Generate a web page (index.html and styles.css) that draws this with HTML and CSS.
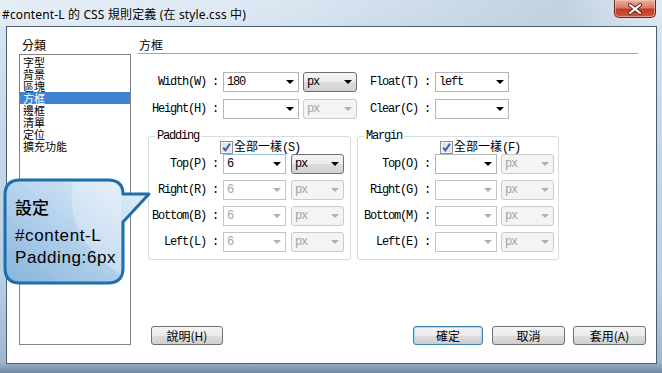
FILE: index.html
```html
<!DOCTYPE html>
<html lang="zh-TW">
<head>
    <meta charset="UTF-8">
    <meta name="viewport" content="width=device-width, initial-scale=1.0">
    <title>#content-L 的 CSS 規則定義</title>
    <link rel="stylesheet" href="styles.css">
</head>
<body>
    <div class="window">
        <!-- 標題列 -->
        <div class="titlebar">
            <span class="title">#content-L 的 CSS 規則定義 (在 style.css 中)</span>
            <div class="close">
                <svg width="16" height="12" viewBox="0 0 16 12">
                    <path d="M3 2 L13 10 M13 2 L3 10" stroke="#5a2418" stroke-width="4" stroke-linecap="round"/>
                    <path d="M3 2 L13 10 M13 2 L3 10" stroke="#ffffff" stroke-width="2.2" stroke-linecap="round"/>
                </svg>
            </div>
        </div>

        <div class="client">
            <!-- 分類 -->
            <div class="category">
                <div class="heading">分類</div>
                <ul class="list">
                    <li>字型</li>
                    <li>背景</li>
                    <li>區塊</li>
                    <li class="selected">方框</li>
                    <li>邊框</li>
                    <li>清單</li>
                    <li>定位</li>
                    <li>擴充功能</li>
                </ul>
            </div>

            <!-- 方框 -->
            <div class="panel">
                <div class="panel-title">方框</div>

                <div class="row">
                    <span class="lbl lbl-main m">Width(W) :</span>
                    <div class="select w-size"><span class="m">180</span><i class="arrow"></i></div>
                    <div class="select unit w-unit"><span class="m">px</span><i class="arrow"></i></div>
                    <span class="lbl lbl-side m">Float(T) :</span>
                    <div class="select w-float"><span class="m">left</span><i class="arrow"></i></div>
                </div>
                <div class="row row-2">
                    <span class="lbl lbl-main m">Height(H) :</span>
                    <div class="select w-size"><span class="m"></span><i class="arrow"></i></div>
                    <div class="select unit off w-unit"><span class="m">px</span><i class="arrow"></i></div>
                    <span class="lbl lbl-side m">Clear(C) :</span>
                    <div class="select w-float"><span class="m"></span><i class="arrow"></i></div>
                </div>

                <div class="groups">
                    <fieldset class="group group-pad">
                        <legend class="m">Padding</legend>
                        <div class="same">
                            <svg class="check" width="13" height="13" viewBox="0 0 13 13">
                                <rect x="0.5" y="0.5" width="12" height="12" fill="#f4f4f4" stroke="#8e8f8f"/>
                                <rect x="2" y="2" width="9" height="9" fill="#e2e6ec"/>
                                <path d="M3.2 6.6 L5.4 9.4 L10 2.8" fill="none" stroke="#3a5da6" stroke-width="1.9"/>
                            </svg>
                            <span class="same-text">全部一樣<span class="m">(S)</span></span>
                        </div>
                        <div class="row">
                            <span class="lbl m">Top(P) :</span>
                            <div class="select box focus"><span class="m">6</span><i class="arrow"></i></div>
                            <div class="select unit"><span class="m">px</span><i class="arrow"></i></div>
                        </div>
                        <div class="row">
                            <span class="lbl m">Right(R) :</span>
                            <div class="select box off"><span class="m">6</span><i class="arrow"></i></div>
                            <div class="select unit off"><span class="m">px</span><i class="arrow"></i></div>
                        </div>
                        <div class="row">
                            <span class="lbl m">Bottom(B) :</span>
                            <div class="select box off"><span class="m">6</span><i class="arrow"></i></div>
                            <div class="select unit off"><span class="m">px</span><i class="arrow"></i></div>
                        </div>
                        <div class="row">
                            <span class="lbl m">Left(L) :</span>
                            <div class="select box off"><span class="m">6</span><i class="arrow"></i></div>
                            <div class="select unit off"><span class="m">px</span><i class="arrow"></i></div>
                        </div>
                    </fieldset>

                    <fieldset class="group group-mar">
                        <legend class="m">Margin</legend>
                        <div class="same">
                            <svg class="check" width="13" height="13" viewBox="0 0 13 13">
                                <rect x="0.5" y="0.5" width="12" height="12" fill="#f4f4f4" stroke="#8e8f8f"/>
                                <rect x="2" y="2" width="9" height="9" fill="#e2e6ec"/>
                                <path d="M3.2 6.6 L5.4 9.4 L10 2.8" fill="none" stroke="#3a5da6" stroke-width="1.9"/>
                            </svg>
                            <span class="same-text">全部一樣<span class="m">(F)</span></span>
                        </div>
                        <div class="row">
                            <span class="lbl m">Top(O) :</span>
                            <div class="select box"><span class="m"></span><i class="arrow"></i></div>
                            <div class="select unit off"><span class="m">px</span><i class="arrow"></i></div>
                        </div>
                        <div class="row">
                            <span class="lbl m">Right(G) :</span>
                            <div class="select box off"><span class="m"></span><i class="arrow"></i></div>
                            <div class="select unit off"><span class="m">px</span><i class="arrow"></i></div>
                        </div>
                        <div class="row">
                            <span class="lbl m">Bottom(M) :</span>
                            <div class="select box off"><span class="m"></span><i class="arrow"></i></div>
                            <div class="select unit off"><span class="m">px</span><i class="arrow"></i></div>
                        </div>
                        <div class="row">
                            <span class="lbl m">Left(E) :</span>
                            <div class="select box off"><span class="m"></span><i class="arrow"></i></div>
                            <div class="select unit off"><span class="m">px</span><i class="arrow"></i></div>
                        </div>
                    </fieldset>
                </div>

                <div class="buttons">
                    <button class="btn btn-help">說明(H)</button>
                    <button class="btn btn-ok">確定</button>
                    <button class="btn btn-cancel">取消</button>
                    <button class="btn btn-apply">套用(A)</button>
                </div>
            </div>
        </div>

        <!-- 說明框 -->
        <div class="bubble">
            <svg width="152" height="112" viewBox="0 0 152 112">
                <defs>
                    <linearGradient id="bubbleFill" x1="1" y1="0" x2="0" y2="1">
                        <stop offset="0" stop-color="#e6f1fa"/>
                        <stop offset="0.45" stop-color="#bcd7ef"/>
                        <stop offset="1" stop-color="#86b3dc"/>
                    </linearGradient>
                </defs>
                <path d="M17 3 H105 Q120 3 120 17 H146 L120 45 V91 Q120 106 105 106 H17 Q2 106 2 91 V18 Q2 3 17 3 Z"
                      fill="url(#bubbleFill)" stroke="#1d6fa9" stroke-width="3" stroke-linejoin="round"/>
                <path d="M70 5 Q60 60 118 98 L118 20 Q118 5 105 5 Z" fill="#ffffff" opacity="0.28"/>
            </svg>
            <div class="bubble-text">
                <div class="b1">設定</div>
                <div class="b2">#content-L</div>
                <div class="b3">Padding:6px</div>
            </div>
        </div>
    </div>
</body>
</html>
```

FILE: styles.css
```css
* {
    box-sizing: border-box;
}
body {
    margin: 0;
    width: 662px;
    height: 373px;
    overflow: hidden;
    font-family: "Noto Sans CJK TC", sans-serif;
    font-size: 12px;
    color: #000;
}
.m {
    font-family: "Liberation Mono", "Noto Sans CJK TC", monospace;
    font-size: 12px;
    letter-spacing: -1.2px;
}

/* 視窗外框 */
.window {
    position: relative;
    width: 662px;
    height: 373px;
    display: flex;
    flex-direction: column;
    background: linear-gradient(180deg, #dce8f3 0%, #c8daeb 30%, #b9cfe4 75%, #9fb6cb 97%, #6f8aa3 100%);
}
.titlebar {
    position: relative;
    height: 26px;
    padding-left: 2px;
    background: linear-gradient(90deg, rgba(255, 255, 255, 0.25) 0%, rgba(255, 255, 255, 0) 40%, rgba(120, 145, 170, 0.25) 85%, rgba(255, 255, 255, 0.1) 100%);
}
.title {
    display: block;
    padding-top: 6px;
    line-height: 17px;
    font-family: "Noto Sans", "Noto Sans CJK TC", sans-serif;
    font-size: 12px;
    letter-spacing: 0.15px;
    text-shadow: 0 0 6px rgba(255, 255, 255, 0.9);
}
.close {
    position: absolute;
    top: 0;
    right: 6px;
    width: 42px;
    height: 18px;
    display: flex;
    align-items: center;
    justify-content: center;
    border: 1px solid #6b2a1e;
    border-top: none;
    border-radius: 0 0 5px 5px;
    background: linear-gradient(180deg, #eab0a2 0%, #d77c66 45%, #c23b22 55%, #d2583e 100%);
    box-shadow: inset 0 0 0 1px rgba(255, 210, 200, 0.5);
}

/* 內容區 */
.client {
    display: flex;
    height: 338px;
    margin: 0 5px 0 6px;
    border: 1px solid #4a5c6e;
    background: #fff;
}
.category {
    width: 124px;
    padding-left: 12px;
}
.heading {
    height: 27px;
    padding: 11px 0 0 3px;
    line-height: 14px;
}
.list {
    height: 291px;
    margin: 0;
    padding: 1px 0 0 0;
    list-style: none;
    border: 1px solid #828282;
}
.list li {
    height: 12px;
    line-height: 12px;
    font-size: 11px;
    padding-left: 3px;
}
.list li.selected {
    background-color: #3e84d3;
    color: #fff;
}

.panel {
    flex: 1;
    margin-left: 7px;
    display: flex;
    flex-direction: column;
}
.panel-title {
    height: 27px;
    margin-right: 18px;
    padding: 11px 0 0 1px;
    line-height: 14px;
    border-bottom: 1px solid #a5a5a5;
}

.row {
    display: flex;
    align-items: center;
    height: 20px;
}
.panel > .row {
    margin-top: 18px;
}
.panel > .row-2 {
    margin-top: 7px;
}
.lbl {
    text-align: right;
    white-space: pre;
    margin-right: 5px;
}
.lbl-main {
    width: 80px;
}
.lbl-side {
    width: 73px;
}

/* 下拉選單 */
.select {
    height: 20px;
    display: flex;
    align-items: center;
    justify-content: space-between;
    padding: 0 4px 0 3px;
    background: #fff;
    border: 1px solid #b4b6bb;
}
.select .arrow {
    width: 0;
    height: 0;
    border-top: 4px solid #000;
    border-left: 4px solid transparent;
    border-right: 4px solid transparent;
}
.select.focus {
    border-color: #9cc1e6;
}
.select.unit {
    border-color: #707070;
    border-radius: 3px;
    background: linear-gradient(180deg, #f4f4f4 0%, #ebebeb 50%, #dcdcdc 51%, #d2d2d2 100%);
}
.select.off {
    color: #a3a3a3;
    border-color: #c5c5c5;
}
.select.off .arrow {
    border-top-color: #b0b0b0;
}
.select.unit.off {
    background: #f4f4f4;
    border-color: #cacaca;
}
.w-size {
    width: 76px;
    margin-right: 4px;
}
.w-unit {
    width: 54px;
}
.w-float {
    width: 74px;
}

/* Padding / Margin 群組 */
.groups {
    display: flex;
    gap: 6px;
    margin: 10px 0 0 10px;
}
.group {
    margin: 0;
    padding: 0 0 7px 0;
    border: 1px solid #d5dde3;
    border-radius: 3px;
}
.group legend {
    margin-left: 6px;
    padding: 0 2px;
    line-height: 14px;
}
.group-pad {
    width: 203px;
}
.group-mar {
    width: 202px;
}
.same {
    height: 12px;
    margin-top: -2px;
    display: flex;
    align-items: center;
    gap: 1px;
}
.same-text {
    line-height: 12px;
}
.group-pad .same {
    padding-left: 71px;
}
.group-mar .same {
    padding-left: 82px;
}
.check {
    flex: none;
}
.same + .row {
    margin-top: 1px;
}
.group .row + .row {
    margin-top: 6px;
}
.group .lbl {
    width: 69px;
}
.group-mar .lbl {
    width: 72px;
}
.group .box {
    width: 63px;
    margin-right: 5px;
}
.group-mar .box {
    width: 62px;
    margin-right: 4px;
}
.group .unit {
    width: 53px;
}

/* 按鈕 */
.buttons {
    display: flex;
    margin-top: auto;
    margin-bottom: 18px;
    padding-right: 10px;
}
.btn {
    height: 19px;
    padding: 0;
    font-family: "Noto Sans CJK TC", sans-serif;
    font-size: 12px;
    line-height: 16px;
    color: #000;
    border: 1px solid #707070;
    border-radius: 3px;
    background: linear-gradient(180deg, #f3f3f3 0%, #ebebeb 50%, #dddddd 51%, #cfcfcf 100%);
}
.btn-help {
    width: 72px;
    margin-left: 13px;
}
.btn-ok {
    width: 70px;
    margin-left: auto;
    border-color: #3c7fb1;
    box-shadow: inset 0 0 0 1px #a6d6f2;
}
.btn-cancel {
    width: 73px;
    margin-left: 9px;
}
.btn-apply {
    width: 73px;
    margin-left: 8px;
}

/* 說明框 */
.bubble {
    position: absolute;
    left: 3px;
    top: 177px;
    width: 152px;
    height: 112px;
}
.bubble svg {
    display: block;
}
.bubble-text {
    position: absolute;
    left: 12px;
    top: 19px;
    font-family: "Liberation Sans", "Noto Sans CJK TC", sans-serif;
    font-size: 17px;
    letter-spacing: 0.6px;
}
.b1 {
    font-family: "Noto Sans CJK TC", sans-serif;
    font-weight: 500;
    font-size: 17px;
    letter-spacing: 0;
    line-height: 22px;
}
.b2 {
    margin-top: 7px;
    line-height: 22px;
}
.b3 {
    line-height: 22px;
}
```
